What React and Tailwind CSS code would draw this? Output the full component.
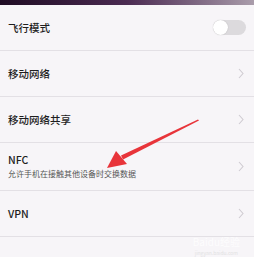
import React from 'react';

const rows = [
  { id: 'airplane', title: '飞行模式', toggle: true },
  { id: 'mobile', title: '移动网络' },
  { id: 'hotspot', title: '移动网络共享' },
  { id: 'nfc', title: 'NFC', sub: '允许手机在接触其他设备时交换数据' },
  { id: 'vpn', title: 'VPN' },
];

const Chevron = () => (
  <svg width="6" height="11" viewBox="0 0 6 11" className="mr-[10px]">
    <path d="M1 1l4 4.5L1 10" fill="none" stroke="#cfcbd1" strokeWidth="1.1" />
  </svg>
);

const Toggle = () => (
  <div className="mr-[8px] flex h-[15px] w-[33px] items-center rounded-full bg-[#dcdadd]">
    <div className="h-[15px] w-[15px] rounded-full bg-white shadow-[0_0_1px_rgba(0,0,0,0.25)]" />
  </div>
);

export default function App() {
  return (
    <div
      className="relative h-[257px] w-[254px] overflow-hidden bg-[#f7f5f8] text-[#1e1e1e]"
      style={{ fontFamily: '"Noto Sans CJK SC", "Liberation Sans", sans-serif' }}
    >
      <div className="h-[5px] bg-gradient-to-r from-[#200c24] via-[#4b2b52] to-[#aa9dab]" />

      {rows.map((row) => (
        <div
          key={row.id}
          className={`flex items-center justify-between border-b border-[#e3e0e5] pl-[8px] ${
            row.sub ? 'h-[48px]' : 'h-[46px]'
          }`}
        >
          <div className="flex flex-col">
            <span className="text-[10.5px] font-medium leading-[14px]">{row.title}</span>
            {row.sub && (
              <span className="mt-[1px] text-[8px] leading-[12px] text-[#555]">{row.sub}</span>
            )}
          </div>
          {row.toggle ? <Toggle /> : <Chevron />}
        </div>
      ))}

      {/* 水印 */}
      <div className="absolute right-[14px] top-[236px] flex flex-col items-center gap-[2px] text-white opacity-80">
        <span className="text-[10px] leading-[12px]">Baidu经验</span>
        <span className="text-[5px] leading-[6px] text-[#ddd]">jingyan.baidu.com</span>
      </div>

      {/* 红色箭头 */}
      <svg className="absolute left-0 top-0" width="254" height="257" viewBox="0 0 254 257">
        <polygon points="198,119.5 199,120.5 123,159.5 121,155.5" fill="#e8343a" />
        <polygon points="107,168 116,151 127,164" fill="#e8343a" />
      </svg>
    </div>
  );
}
